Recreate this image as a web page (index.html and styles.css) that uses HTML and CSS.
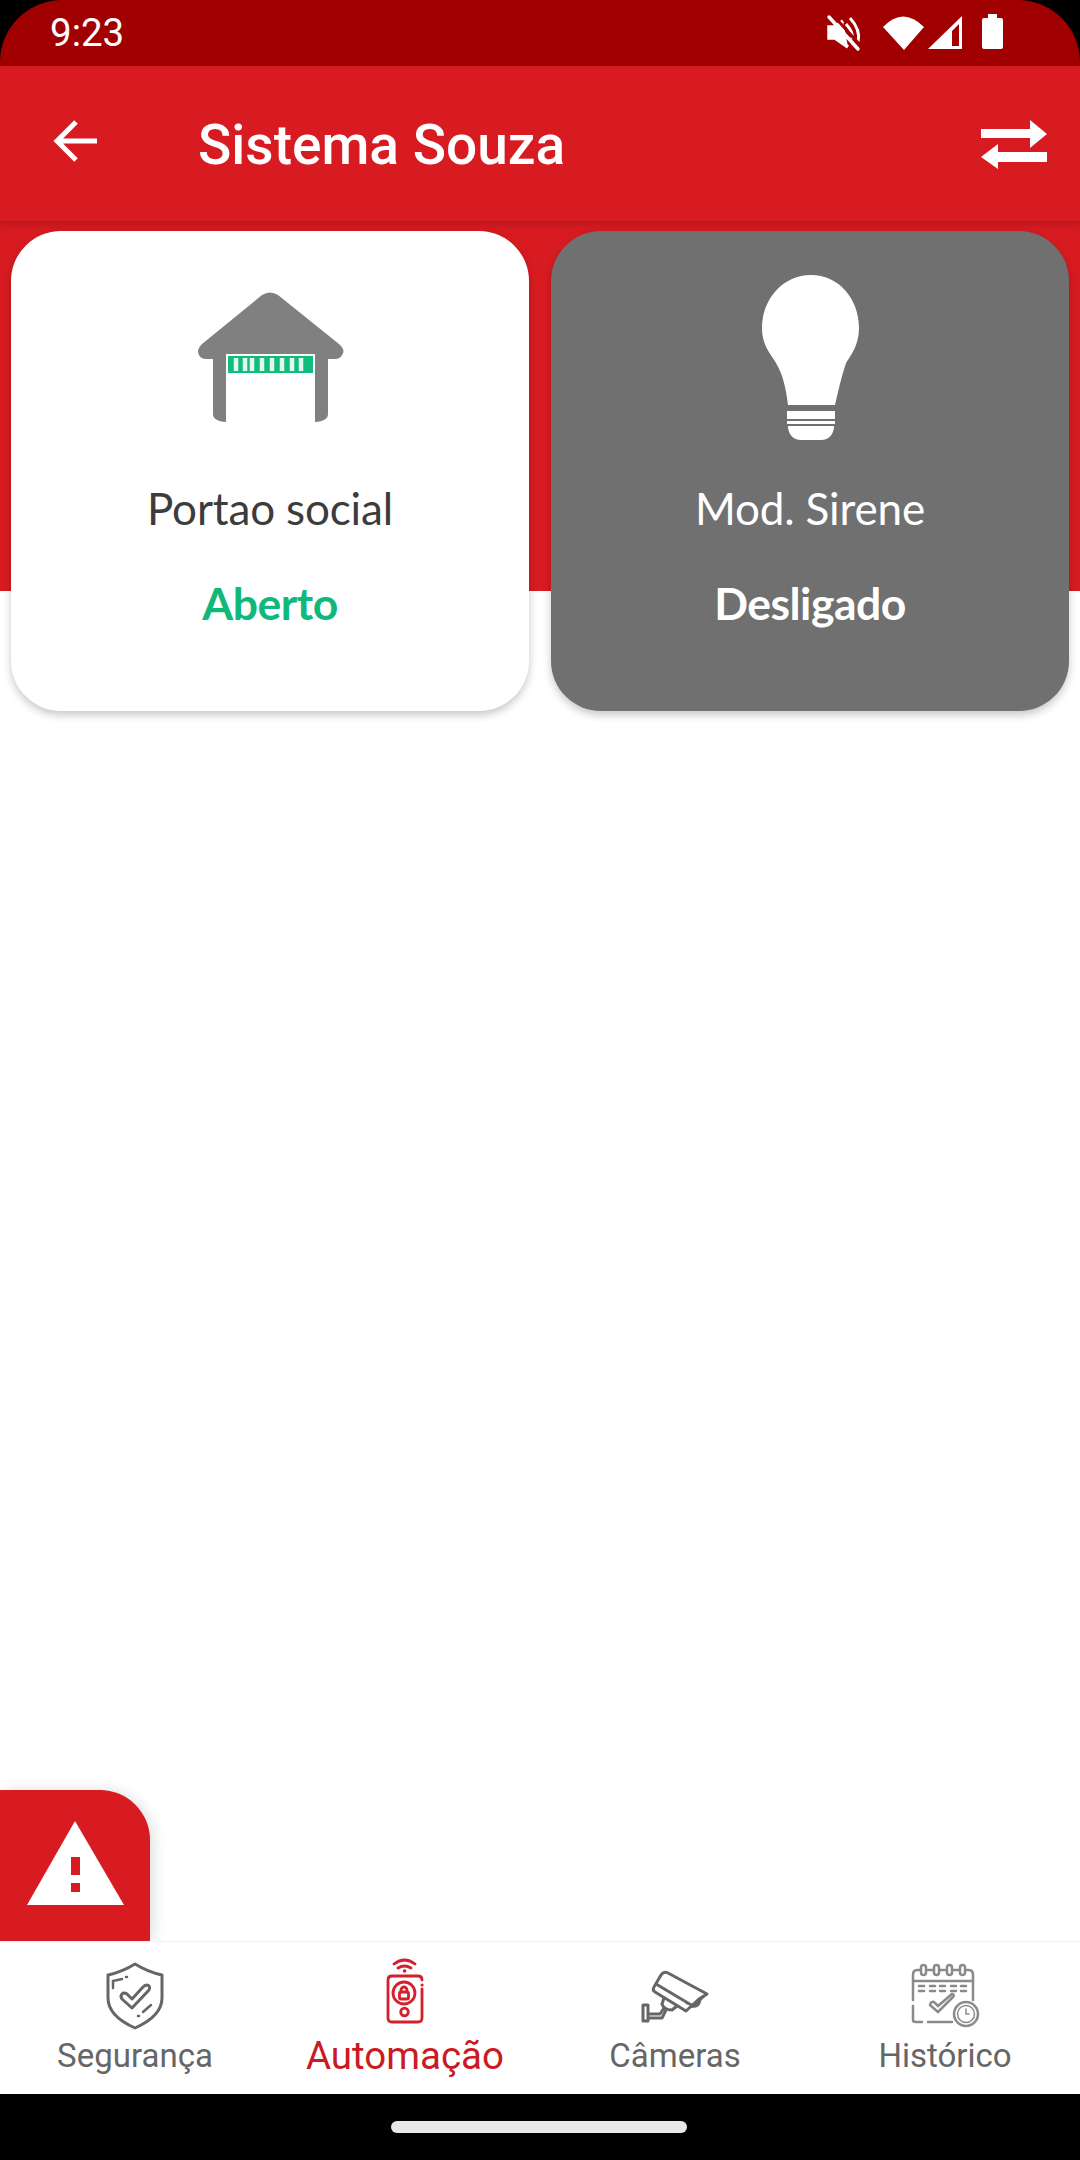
FILE: index.html
```html
<!DOCTYPE html>
<html lang="pt">
<head>
<meta charset="utf-8">
<title>Sistema Souza</title>
<link rel="stylesheet" href="styles.css">
</head>
<body>
<div class="screen">
  <div class="statusbar">
    <span class="time">9:23</span>
    <svg class="status-icons" viewBox="820 10 190 45" width="190" height="45">
      <g fill="none" stroke="#fff" stroke-width="3.5">
        <path d="M843 21 L835 27 H829 V38 H835 L848 47" stroke-width="3.5" fill="#fff"/>
        <path d="M846 24 Q854 33 852 39 M850 18 Q861 30 858 42" stroke-width="3"/>
        <path d="M829 17 L858 49" stroke="#a00000" stroke-width="3" transform="translate(3 -3)"/>
        <path d="M829 17 L858 49" stroke-linecap="round"/>
      </g>
      <path d="M883 27 Q903 6 924 27 L904 50 Z" fill="#fff"/>
      <path d="M928 49 L962 16 V49 Z M952 46 H959 V24 L952 31 Z" fill="#fff" fill-rule="evenodd"/>
      <path d="M988 14 H997 V18 H1001 Q1003 18 1003 20 V47 Q1003 49 1001 49 H984 Q982 49 982 47 V20 Q982 18 984 18 H988 Z" fill="#fff"/>
    </svg>
  </div>

  <header class="appbar">
    <svg class="back" viewBox="0 0 48 48" width="48" height="48">
      <path d="M45 23 H6 M24 4 L5 23 L24 42" fill="none" stroke="#fff" stroke-width="5"/>
    </svg>
    <h1 class="title">Sistema Souza</h1>
    <svg class="swap" viewBox="981 116 66 52" width="66" height="52">
      <path d="M981 127 H1030 V118 L1047 132 L1030 146 V136 H981 Z M1047 150 H998 V142 L981 155 L998 167 V160 H1047 Z" fill="#fff"/>
    </svg>
  </header>

  <main class="content">
    <section class="cards">
      <article class="card">
        <div class="card-icon">
          <svg viewBox="190 285 160 145" width="160" height="145">
            <path d="M262 295 Q270 290 278 295 L339 344 Q346 350 342 355 Q340 359 335 359 H328 V414 Q328 421 315 422 V354 H226 V422 Q213 421 213 414 V359 H206 Q201 359 199 355 Q196 350 202 344 Z" fill="#808080"/>
            <rect x="226" y="354" width="89" height="20" fill="#fff"/>
            <rect x="228" y="356" width="85" height="17" fill="#10bd7d"/>
            <path d="M236 358 v13 M245 358 v13 M252 358 v13 M262 358 v13 M272 358 v13 M282 358 v13 M292 358 v13 M301 358 v13" stroke="#e4f8ef" stroke-width="4.5"/>
          </svg>
        </div>
        <p class="card-name">Portao social</p>
        <p class="card-state state-open">Aberto</p>
      </article>
      <article class="card card-off">
        <div class="card-icon">
          <svg viewBox="755 270 110 175" width="110" height="175">
            <path d="M811 275 C838 275 859 298 859 328 C859 345 851 355 846 363 C841 378 838 392 835 405 H788 C786 388 783 375 776 363 C770 353 762 345 762 328 C762 298 784 275 811 275 Z" fill="#fff"/>
            <rect x="787" y="411" width="48" height="8" fill="#fff"/>
            <rect x="787" y="421" width="48" height="3" fill="#fff"/>
            <path d="M788 426 H834 C834 434 829 440 821 440 H801 C793 440 788 434 788 426 Z" fill="#fff"/>
          </svg>
        </div>
        <p class="card-name">Mod. Sirene</p>
        <p class="card-state">Desligado</p>
      </article>
    </section>
    <button class="alert" aria-label="Alerta">
      <svg viewBox="20 1815 110 95" width="110" height="95">
        <path d="M75 1821 L124 1905 H27 Z" fill="#fff"/>
        <rect x="71" y="1857" width="9" height="18" fill="#d81b21"/>
        <rect x="71" y="1883" width="9" height="9" fill="#d81b21"/>
      </svg>
    </button>
  </main>

  <nav class="tabs">
    <a class="tab">
      <svg viewBox="100 1955 70 80" width="70" height="80">
        <path d="M135 1964 Q148 1972 162 1975 V1998 Q162 2016 135 2028 Q108 2016 108 1998 V1975 Q122 1972 135 1964 Z" fill="none" stroke="#666" stroke-width="3" stroke-linejoin="round"/>
        <path d="M113 1988 V1981 L122 1979 M126 1977 h1 M143 2012 L151 2005 M138 2016 h1" fill="none" stroke="#666" stroke-width="2.5" stroke-linecap="round"/>
        <path d="M122 1999 L132 2008 L149 1990 Q151 1986 147 1985 Q145 1985 143 1987 L132 1999 L127 1994 Q124 1992 122 1994 Q120 1996 122 1999 Z" fill="none" stroke="#666" stroke-width="3" stroke-linejoin="round"/>
      </svg>
      <span>Segurança</span>
    </a>
    <a class="tab tab-active">
      <svg viewBox="370 1955 70 80" width="70" height="80">
        <g fill="none" stroke="#d4202a" stroke-width="2.8" stroke-linecap="round">
          <path d="M394 1964 Q404.5 1956 415 1964 M398 1968 Q404.5 1964 411 1968"/>
          <path d="M404.5 1971 h.1" stroke-width="3.5"/>
          <path d="M422 1989 V2018 Q422 2022 418 2022 H392 Q388 2022 388 2018 V1980 Q388 1976 392 1976 H418 Q422 1976 422 1980"/>
          <circle cx="404" cy="1993" r="11"/>
          <path d="M422 1985 h.1" stroke-width="3"/>
          <rect x="399.5" y="1992" width="9" height="7" rx="1.5"/>
          <path d="M401 1992 v-2 a3 3 0 0 1 6 0 v2"/>
          <circle cx="404.5" cy="2012" r="3.8"/>
        </g>
      </svg>
      <span>Automação</span>
    </a>
    <a class="tab">
      <svg viewBox="640 1955 70 80" width="70" height="80" class="icon-camera">
        <g fill="none" stroke="#666" stroke-width="3" stroke-linejoin="round">
          <path d="M661 1975 Q664 1971 668 1973 L707 1994 L699 1999 L686 2011 L655 1992 Q652 1990 654 1987 Z"/>
          <path d="M656 1984 L693 2006 L704 1996"/>
          <path d="M690 2006 Q700 2008 700 1998"/>
          <path d="M664 1998 L662 2004 Q664 2010 672 2010 L677 2006"/>
          <path d="M664 2008 L660 2014 H648"/>
          <path d="M666 2010 L662 2018 H648"/>
          <rect x="643" y="2005" width="5" height="16"/>
        </g>
        <circle cx="687" cy="2003" r="1.5" fill="#666"/>
      </svg>
      <span>Câmeras</span>
    </a>
    <a class="tab">
      <svg viewBox="905 1955 80 80" width="80" height="80">
        <g fill="none" stroke="#8a8a8a" stroke-width="2.5" stroke-linecap="round">
          <path d="M921 1970 H917 Q913 1970 913 1975 V2000 M913 2006 V2020 Q913 2022 916 2022 H922 M928 2022 H952"/>
          <path d="M973 2000 V1975 Q973 1970 969 1970 H965 M927 1970 H934 M940 1970 H947 M953 1970 H960"/>
          <rect x="921" y="1965" width="5" height="10" rx="2.5"/>
          <rect x="934" y="1965" width="5" height="10" rx="2.5"/>
          <rect x="947" y="1965" width="5" height="10" rx="2.5"/>
          <rect x="960" y="1965" width="5" height="10" rx="2.5"/>
          <path d="M913 1981 H973"/>
          <path d="M919 1986 h5 M930 1986 h5 M940 1986 h5 M951 1986 h5 M961 1986 h5 M919 1991 h5 M930 1991 h5 M940 1991 h5 M951 1991 h5 M961 1991 h5"/>
          <path d="M930 2005 L938 2012 L953 1997 Q955 1995 952 1994 L938 2006 L934 2002 Q931 2001 930 2005 Z"/>
          <circle cx="966" cy="2014" r="12"/>
          <circle cx="966" cy="2014" r="8.5" stroke-width="1.5"/>
          <path d="M966 2009 V2014 H969" stroke-width="1.5"/>
        </g>
      </svg>
      <span>Histórico</span>
    </a>
  </nav>

  <footer class="navbar"><span class="pill"></span></footer>
</div>
</body>
</html>
```
FILE: styles.css
```css
* { box-sizing: border-box; }
html, body { margin: 0; padding: 0; background: #000; }
.screen {
  width: 1080px;
  height: 2160px;
  display: flex;
  flex-direction: column;
  overflow: hidden;
  background: #000;
  font-family: Roboto, sans-serif;
}

.statusbar {
  height: 66px;
  flex: none;
  display: flex;
  align-items: center;
  justify-content: space-between;
  background: #a00000;
  border-radius: 62px 62px 0 0 / 62px 62px 0 0;
  padding: 0 70px 0 50px;
  color: #fff;
}
.time { font-size: 38.5px; line-height: 66px; height: 66px; }
.status-icons { display: block; margin-top: -1px; }

.appbar {
  position: relative;
  z-index: 2;
  height: 155px;
  flex: none;
  display: flex;
  align-items: center;
  background: #d81b21;
  padding: 0 33px 0 52px;
  box-shadow: 0 3px 8px rgba(0, 0, 0, .18);
}
.back { flex: none; margin-top: -3px; }
.title {
  flex: 1;
  margin: 3px 0 0 98px;
  font-size: 55px;
  font-weight: 500;
  color: #fff;
  line-height: 62px;
}
.swap { flex: none; }

.content {
  flex: 1;
  min-height: 0;
  display: flex;
  flex-direction: column;
  background: linear-gradient(#d81b21 0 370px, #fff 370px);
}
.cards {
  display: grid;
  grid-template-columns: 518px 518px;
  gap: 22px;
  padding: 10px 11px 0;
}
.card {
  height: 480px;
  border-radius: 50px;
  background: #fff;
  box-shadow: 0 4px 8px rgba(0, 0, 0, .22);
  display: flex;
  flex-direction: column;
  align-items: center;
  padding-top: 41px;
  color: #3c3c3c;
  font-family: Lato, sans-serif;
}
.card-off { background: #707070; color: #fff; }
.card-icon {
  height: 170px;
  display: flex;
  align-items: center;
  justify-content: center;
}
.card-icon svg { display: block; }
.card-name {
  margin: 36px 0 0;
  font-size: 44px;
  line-height: 60px;
  letter-spacing: -.15px;
}
.card-state {
  margin: 35px 0 0;
  font-size: 44.5px;
  line-height: 60px;
  font-weight: 700;
  letter-spacing: -.5px;
}
.state-open { color: #10b97b; }

.alert {
  margin-top: auto;
  width: 150px;
  height: 151px;
  flex: none;
  border: 0;
  padding: 0;
  background: #d81b21;
  border-radius: 0 50px 0 0;
  box-shadow: 4px 0 14px rgba(0, 0, 0, .12);
  display: flex;
  align-items: center;
  justify-content: center;
}
.alert svg { display: block; margin-top: -6px; }

.tabs {
  height: 153px;
  flex: none;
  display: grid;
  grid-template-columns: repeat(4, 270px);
  background: #fff;
  border-top: 1px solid #f2f2f2;
}
.tab {
  display: flex;
  flex-direction: column;
  align-items: center;
  color: #666;
  font-size: 33px;
  padding-top: 13px;
}
.tab svg { display: block; }
.tab span { line-height: 40px; margin-top: 1px; }
.tab-active { color: #cc1a24; font-size: 38.5px; }

.navbar {
  height: 66px;
  flex: none;
  display: flex;
  align-items: center;
  justify-content: center;
  background: #000;
}
.pill {
  width: 296px;
  height: 12px;
  border-radius: 6px;
  background: #e8e8e8;
  margin-left: -2px;
}
```
